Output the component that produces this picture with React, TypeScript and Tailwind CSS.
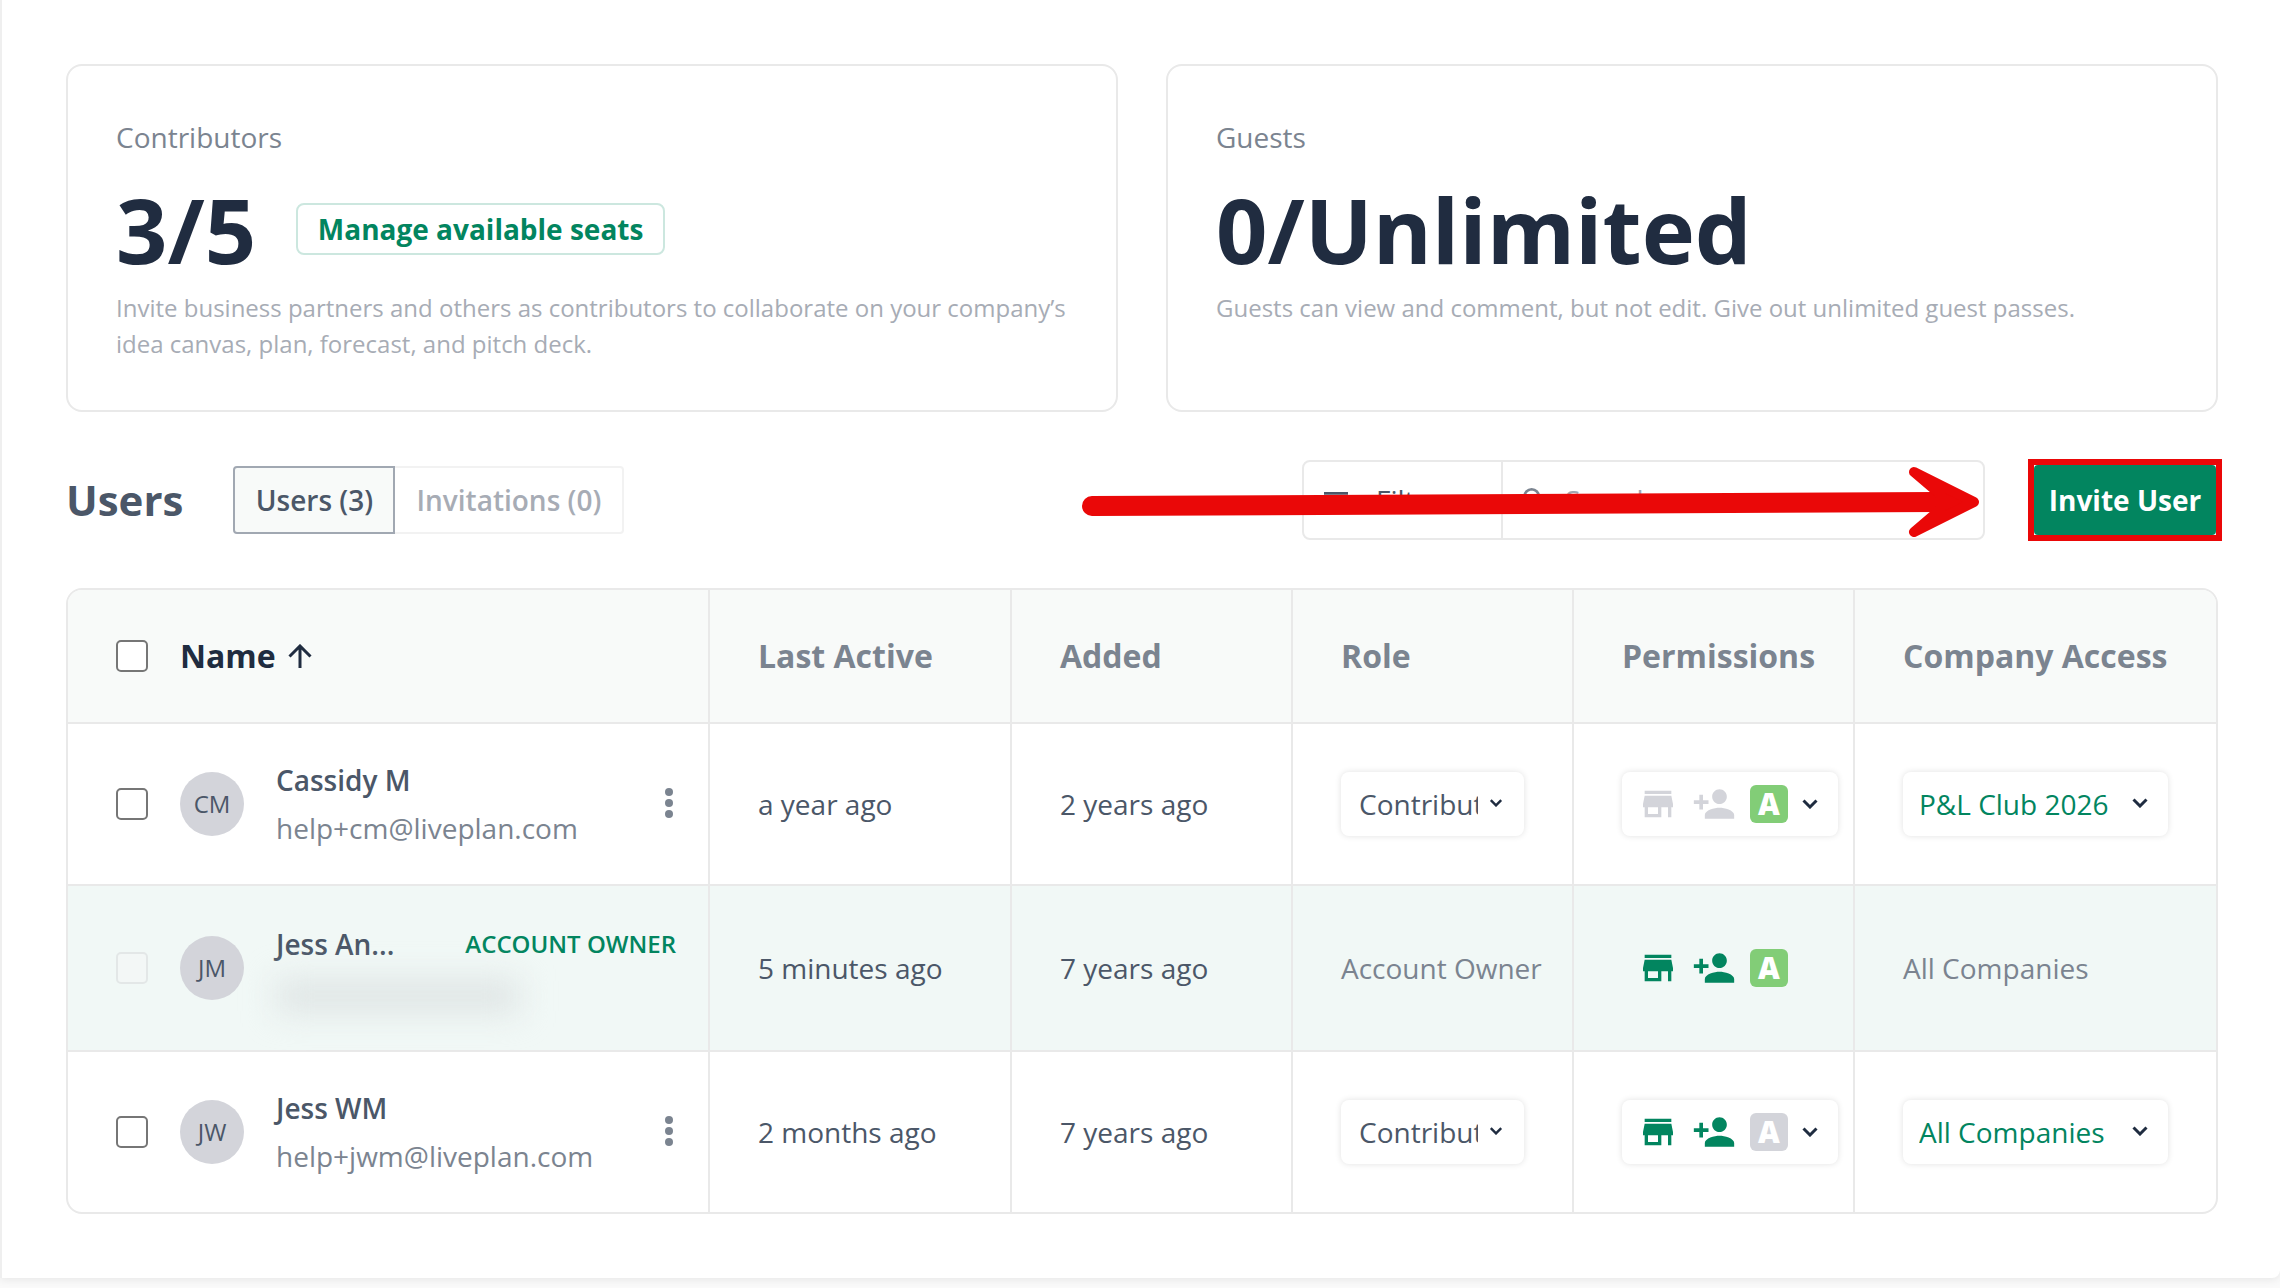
import { MdFilterList, MdPersonAdd, MdSearch, MdStore } from "react-icons/md"
import clsx from "clsx"

interface User {
  initials: string
  name: string
  email: string | null
  lastActive: string
  added: string
  owner?: boolean
  company: string
  permissions: { company: boolean; invite: boolean; advisor: boolean }
}

const users: User[] = [
  {
    initials: "CM",
    name: "Cassidy M",
    email: "help+cm@liveplan.com",
    lastActive: "a year ago",
    added: "2 years ago",
    company: "P&L Club 2026",
    permissions: { company: false, invite: false, advisor: true },
  },
  {
    initials: "JM",
    name: "Jess An...",
    email: null,
    lastActive: "5 minutes ago",
    added: "7 years ago",
    owner: true,
    company: "All Companies",
    permissions: { company: true, invite: true, advisor: true },
  },
  {
    initials: "JW",
    name: "Jess WM",
    email: "help+jwm@liveplan.com",
    lastActive: "2 months ago",
    added: "7 years ago",
    company: "All Companies",
    permissions: { company: true, invite: true, advisor: false },
  },
]

const control = "h-16 rounded-lg bg-white shadow-[0_0_6px_rgba(0,0,0,0.12)]"

function Chevron({ className }: { className?: string }) {
  return (
    <svg viewBox="0 0 16 10" className={clsx("h-[10px] w-4 shrink-0 text-[#1f2c40]", className)} aria-hidden="true">
      <path d="M1.5 1.5 L8 8 L14.5 1.5" fill="none" stroke="currentColor" strokeWidth="3" />
    </svg>
  )
}

function Checkbox({ label, disabled }: { label: string; disabled?: boolean }) {
  return (
    <input
      type="checkbox"
      aria-label={label}
      disabled={disabled}
      className="size-8 shrink-0 appearance-none rounded-[5px] border-2 border-[#767676] bg-white disabled:border-[#e3e7e7] disabled:bg-[#f3f7f6]"
    />
  )
}

function PermissionIcons({ company, invite, advisor }: User["permissions"]) {
  return (
    <>
      <MdStore className={clsx("size-10 shrink-0", company ? "text-[#02855f]" : "text-[#d3d4da]")} />
      <MdPersonAdd className={clsx("size-11 shrink-0", invite ? "text-[#02855f]" : "text-[#d3d4da]")} />
      <span
        className={clsx(
          "flex size-[38px] shrink-0 items-center justify-center rounded-md text-[30px] leading-none font-extrabold text-white",
          advisor ? "bg-[#82cd77]" : "bg-[#d3d4da]",
        )}
      >
        A
      </span>
    </>
  )
}

function SeatCard({ title, count, text, action }: { title: string; count: string; text: string; action?: string }) {
  return (
    <section className="rounded-2xl border-2 border-[#e9e9e9] p-12">
      <h2 className="text-[28px] leading-[46px] text-[#7b8490]">{title}</h2>
      <div className="mt-3 flex h-[114px] items-center gap-10">
        <p className="text-[90px] leading-none font-bold text-[#202c40]">{count}</p>
        {action && (
          <button className="h-[52px] w-[369px] rounded-lg border-2 border-[#cce7df] text-[28px] leading-none font-bold text-[#02855f]">
            {action}
          </button>
        )}
      </div>
      <p className="mt-1 text-[24px] leading-9 text-[#a7acb5]">{text}</p>
    </section>
  )
}

function UserRow({ user, last }: { user: User; last: boolean }) {
  const cell = clsx("border-[#e9e9e9]", !last && "border-b-2")
  const divided = clsx(cell, "border-r-2 pl-12")

  return (
    <tr className={user.owner ? "h-[166px] bg-[#f1f8f6]" : last ? "h-40" : "h-[162px]"}>
      <td className={clsx(divided, "pr-8")}>
        <div className="flex items-center gap-8">
          <Checkbox label={"Select " + user.name} disabled={user.owner} />
          <span className="flex size-16 shrink-0 items-center justify-center rounded-full bg-[#d3d4da] text-[24px] text-[#4b5768]">
            {user.initials}
          </span>
          <div className="min-w-0 grow leading-[48px]">
            <div className="flex items-center justify-between">
              <span className="font-semibold text-[#4b5768]">{user.name}</span>
              {user.owner && <span className="text-[24px] font-semibold text-[#02855f]">ACCOUNT OWNER</span>}
            </div>
            {user.email ? (
              <div className="text-[#7b8490]">{user.email}</div>
            ) : (
              <div className="h-12 pt-3" aria-hidden="true">
                <div className="h-8 w-[244px] bg-[#dee4e4] blur-lg" />
              </div>
            )}
          </div>
          {!user.owner && (
            <button aria-label={"Options for " + user.name}>
              <svg viewBox="0 0 14 32" className="h-8 w-[14px]" fill="#7b8490">
                <circle cx="7" cy="4" r="4" />
                <circle cx="7" cy="15" r="4" />
                <circle cx="7" cy="26" r="4" />
              </svg>
            </button>
          )}
        </div>
      </td>
      <td className={clsx(divided, "font-medium")}>{user.lastActive}</td>
      <td className={clsx(divided, "font-medium")}>{user.added}</td>
      <td className={divided}>
        {user.owner ? (
          <span className="font-medium text-[#7b8490]">Account Owner</span>
        ) : (
          <div className="relative w-[183px]">
            <select
              aria-label={"Role of " + user.name}
              className={clsx(control, "w-full appearance-none pr-[46px] pl-[18px] font-medium text-[#4b5768]")}
            >
              <option>Contributor</option>
              <option>Guest</option>
            </select>
            <Chevron className="pointer-events-none absolute top-[26px] right-5 scale-80" />
          </div>
        )}
      </td>
      <td className={divided}>
        {user.owner ? (
          <div className="flex items-center gap-[14px] pl-4">
            <PermissionIcons {...user.permissions} />
          </div>
        ) : (
          <button
            aria-label={"Permissions of " + user.name}
            className={clsx(control, "flex w-[216px] items-center gap-[14px] pl-4")}
          >
            <PermissionIcons {...user.permissions} />
            <Chevron />
          </button>
        )}
      </td>
      <td className={clsx(cell, "pl-12 font-medium")}>
        {user.owner ? (
          <span className="text-[#7b8490]">{user.company}</span>
        ) : (
          <div className="relative w-[265px]">
            <select
              aria-label={"Company access of " + user.name}
              className={clsx(control, "w-full appearance-none pr-12 pl-4 text-[#02855f]")}
            >
              <option>{user.company}</option>
            </select>
            <Chevron className="pointer-events-none absolute top-[26px] right-5" />
          </div>
        )}
      </td>
    </tr>
  )
}

export default function App() {
  const heading = "border-r-2 border-b-2 border-[#e9e9e9] pl-12 font-bold"

  return (
    <div className="min-h-screen bg-[#fafafa] font-['Open_Sans',sans-serif] text-[28px] text-[#4b5768]">
      <main className="rounded-br-lg border-l-2 border-[#efefef] bg-white pt-16 pr-[62px] pb-16 pl-16 shadow-[0_2px_8px_rgba(0,0,0,0.08)]">
        <div className="grid grid-cols-2 gap-12">
          <SeatCard
            title="Contributors"
            count="3/5"
            action="Manage available seats"
            text="Invite business partners and others as contributors to collaborate on your company’s idea canvas, plan, forecast, and pitch deck."
          />
          <SeatCard
            title="Guests"
            count="0/Unlimited"
            text="Guests can view and comment, but not edit. Give out unlimited guest passes."
          />
        </div>

        <div className="my-[47px] flex items-center">
          <h1 className="text-[42px] leading-none font-bold">Users</h1>
          <div className="ml-[50px] flex h-[68px] font-semibold">
            <button className="w-[162px] rounded-l border-2 border-[#a1a8b2] bg-[#f8faf9]">Users (3)</button>
            <button className="w-[229px] rounded-r border-2 border-l-0 border-[#f2f2f2] text-[#a7acb5]">
              Invitations (0)
            </button>
          </div>

          <div className="relative mr-[43px] ml-auto">
            <div className="flex h-20 w-[683px] rounded-lg border-2 border-[#e9e9e9]">
              <button className="flex w-[199px] items-center gap-6 border-r-2 border-[#e9e9e9] pl-4 font-medium">
                <MdFilterList className="size-8" />
                Filter
              </button>
              <label className="flex grow items-center gap-[14px] pl-4">
                <MdSearch className="size-8 shrink-0 text-[#7b8490]" />
                <input
                  type="search"
                  aria-label="Search users"
                  placeholder="Search"
                  className="w-full outline-none placeholder:text-[#a1a8b2]"
                />
              </label>
            </div>
            {/* callout arrow towards the invite button */}
            <svg
              viewBox="0 0 908 80"
              className="pointer-events-none absolute top-0 right-0 h-20 w-[908px] text-[#ea0808]"
              stroke="currentColor"
              strokeLinecap="round"
              strokeLinejoin="round"
              aria-hidden="true"
            >
              <path d="M15 46 L860 42" fill="none" strokeWidth="20" />
              <path d="M837 12 L897 42 L837 72 L864 49 L864 35 Z" fill="currentColor" strokeWidth="10" />
            </svg>
          </div>

          <div className="-mr-1 border-6 border-[#ea0808]">
            <button className="block h-[70px] w-[182px] rounded bg-[#02855f] font-bold text-white">
              Invite User
            </button>
          </div>
        </div>

        <div className="overflow-hidden rounded-2xl border-2 border-[#e9e9e9]">
          <table className="w-full table-fixed border-separate border-spacing-0 text-left">
            <thead>
              <tr className="h-[134px] bg-[#f8faf9] text-[32px] text-[#7b8490]">
                <th className={heading}>
                  <div className="flex items-center gap-8 text-[#202c40]">
                    <Checkbox label="Select all users" />
                    <button className="flex items-center gap-3">
                      Name
                      <svg viewBox="0 0 24 24" className="size-6" fill="none" stroke="currentColor" strokeWidth="3">
                        <path d="M12 24 V2 M1.5 12.5 L12 2 L22.5 12.5" />
                      </svg>
                    </button>
                  </div>
                </th>
                <th className={clsx(heading, "w-[302px]")}>Last Active</th>
                <th className={clsx(heading, "w-[281px]")}>Added</th>
                <th className={clsx(heading, "w-[281px]")}>Role</th>
                <th className={clsx(heading, "w-[281px]")}>Permissions</th>
                <th className="w-[361px] border-b-2 border-[#e9e9e9] pl-12 font-bold">Company Access</th>
              </tr>
            </thead>
            <tbody>
              {users.map((user, i) => (
                <UserRow key={user.initials} user={user} last={i === users.length - 1} />
              ))}
            </tbody>
          </table>
        </div>
      </main>
    </div>
  )
}
